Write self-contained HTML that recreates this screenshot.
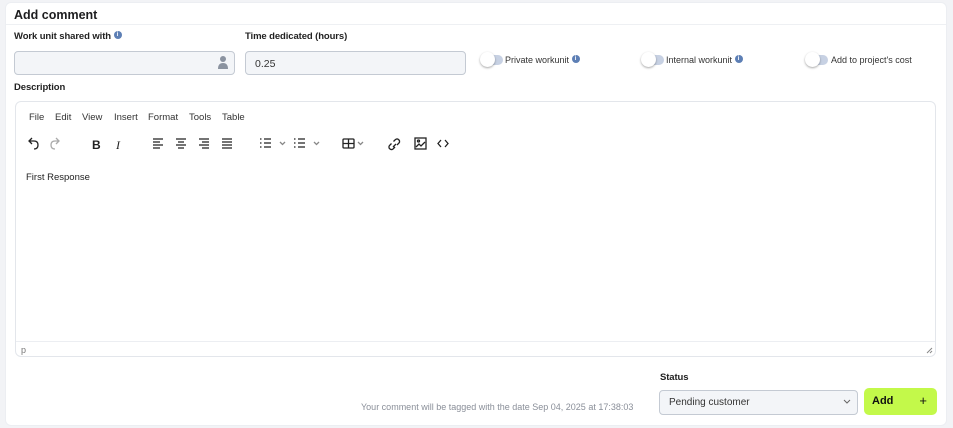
<!DOCTYPE html>
<html><head><meta charset="utf-8"><style>
*{box-sizing:border-box;margin:0;padding:0}
body{width:953px;height:428px;background:#f2f3f6;font-family:"Liberation Sans",sans-serif;position:relative;overflow:hidden;color:#222}
.card{position:absolute;left:5px;top:2px;width:942px;height:424px;background:#fff;border:1px solid #eceef2;border-radius:6px}
.a{position:absolute}
.h{left:14px;top:8px;font-weight:bold;font-size:12.5px;color:#1d1d1f}
.sep{left:6px;top:24px;width:940px;height:1px;background:#eef0f3}
.lbl{font-weight:bold;font-size:9.5px;color:#222;letter-spacing:-0.1px}
.inp{background:#f3f5f8;border:1px solid #c4cad3;border-radius:4px;height:24px;font-size:10.5px;padding:6px 9px;color:#333}
.info{display:inline-block;width:8px;height:8px;border-radius:50%;background:#5d7fb5;color:#fff;font-size:6px;text-align:center;line-height:8px;vertical-align:top;font-weight:bold}
.tg{width:21px;height:10px;border-radius:5px;background:#c7d1e3}
.tg:before{content:"";position:absolute;left:-2px;top:-3px;width:15px;height:15px;border-radius:50%;background:#fff;box-shadow:0 1px 2px rgba(0,0,0,.35)}
.tl{font-size:9px;color:#333}
.ed{left:15px;top:101px;width:921px;height:256px;border:1px solid #e3e6eb;border-radius:6px}
.menu{font-size:9.5px;color:#333;top:112px}
</style></head><body>
<div class="card"></div>
<div class="a h">Add comment</div>
<div class="a sep"></div>
<div class="a lbl" style="left:14px;top:31px">Work unit shared with <span class="info">i</span></div>
<div class="a lbl" style="left:245px;top:31px">Time dedicated (hours)</div>
<div class="a inp" style="left:14px;top:51px;width:221px"></div>
<svg class="a" style="left:217px;top:55px" width="12" height="15" viewBox="0 0 12 15"><circle cx="6" cy="4" r="3" fill="#8b93a0"/><path d="M1 14 Q1 8 6 8 Q11 8 11 14Z" fill="#8b93a0"/></svg>
<div class="a inp" style="left:245px;top:51px;width:221px">0.25</div>
<div class="a tg" style="left:482px;top:55px"></div><div class="a tl" style="left:505px;top:55px">Private workunit <span class="info">i</span></div>
<div class="a tg" style="left:643px;top:55px"></div><div class="a tl" style="left:666px;top:55px">Internal workunit <span class="info">i</span></div>
<div class="a tg" style="left:807px;top:55px"></div><div class="a tl" style="left:831px;top:55px">Add to project's cost</div>
<div class="a lbl" style="left:14px;top:82px">Description</div>
<div class="a ed"></div>
<div class="a menu" style="left:29px">File</div>
<div class="a menu" style="left:55px">Edit</div>
<div class="a menu" style="left:82px">View</div>
<div class="a menu" style="left:114px">Insert</div>
<div class="a menu" style="left:148px">Format</div>
<div class="a menu" style="left:189px">Tools</div>
<div class="a menu" style="left:222px">Table</div>
<svg class="a" style="left:20px;top:134px" width="440" height="20" viewBox="0 0 440 20" fill="none" stroke="#222" stroke-width="1.3">
<path d="M12 4 L9 7 L12 10 M9 7 H14 Q18 7 18 11 Q18 15 14 15"/>
<path d="M36 4 L39 7 L36 10 M39 7 H35 Q31 7 31 11 Q31 15 35 15" stroke="#aaa"/>
<text x="72" y="15" font-size="12" font-weight="bold" fill="#222" stroke="none" font-family="Liberation Sans">B</text>
<text x="96" y="15" font-size="12" font-style="italic" fill="#222" stroke="none" font-family="Liberation Serif">I</text>
<path d="M133 5h10M133 8h7M133 11h10M133 14h7"/>
<path d="M156 5h10M158 8h6M156 11h10M158 14h6"/>
<path d="M179 5h10M182 8h7M179 11h10M182 14h7"/>
<path d="M202 5h10M202 8h10M202 11h10M202 14h10"/>
<path d="M244 5h7M244 9h7M244 13h7M240 5h1.5M240 9h1.5M240 13h1.5"/>
<path d="M260 8l2.5 2.5 2.5-2.5" stroke="#888"/>
<path d="M278 5h7M278 9h7M278 13h7M274 5h1.5M274 9h1.5M274 13h1.5"/>
<path d="M294 8l2.5 2.5 2.5-2.5" stroke="#888"/>
<rect x="323" y="5" width="11" height="9" rx="1"/><path d="M323 9.5h11M328.5 5v9"/>
<path d="M338 8l2.5 2.5 2.5-2.5" stroke="#888"/>
<path d="M375 10l-2 2a2.5 2.5 0 0 1-3.5-3.5l2-2M377 8l2-2a2.5 2.5 0 0 0-3.5-3.5l-2 2M373 10l3-3" transform="translate(0,3)"/>
<rect x="395" y="4" width="11" height="11"/><path d="M396 13l3-3 2 2 4-4"/><circle cx="398.5" cy="7" r="1"/>
<path d="M421 6l-3 3.5 3 3.5M425 6l3 3.5-3 3.5"/>
</svg>
<div class="a" style="left:26px;top:172px;font-size:9.5px;color:#222">First Response</div>
<div class="a" style="left:16px;top:341px;width:919px;height:1px;background:#eceef2"></div>
<div class="a" style="left:21px;top:345px;font-size:9px;color:#777">p</div>
<svg class="a" style="left:926px;top:347px" width="7" height="7"><path d="M1 6L6 1M4 6L6 4" stroke="#888"/></svg>
<div class="a lbl" style="left:660px;top:372px">Status</div>
<div class="a" style="left:361px;top:402px;font-size:9px;color:#8a8f99">Your comment will be tagged with the date Sep 04, 2025 at 17:38:03</div>
<div class="a inp" style="left:659px;top:390px;width:199px;height:25px;font-size:10px;padding:6px 9px">Pending customer</div>
<svg class="a" style="left:843px;top:399px" width="8" height="6"><path d="M1 1l3 3 3-3" stroke="#666" fill="none"/></svg>
<div class="a" style="left:864px;top:388px;width:73px;height:27px;background:#c3f94a;border-radius:5px;font-weight:bold;font-size:11px;padding:7px 8px;color:#111">Add<span style="position:absolute;right:10px;top:5px;font-size:13px;font-weight:normal">+</span></div>
</body></html>
